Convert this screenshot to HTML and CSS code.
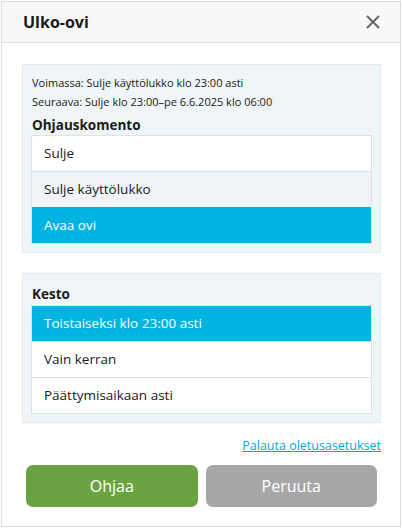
FILE: index.html
```html
<!DOCTYPE html>
<html lang="fi">
<head>
  <meta charset="UTF-8" />
  <meta name="viewport" content="width=device-width, initial-scale=1.0"/>
  <title>Ulko-ovi</title>
  <link rel="stylesheet" href="styles.css">
</head>
<body>
  <div class="dialog">
    <div class="header">
      <h1 class="title">Ulko-ovi</h1>
      <button class="close" aria-label="Sulje">
        <svg width="14" height="14" viewBox="0 0 14 14">
          <path d="M1 1 L13 13 M13 1 L1 13" stroke="#666" stroke-width="2" fill="none"/>
        </svg>
      </button>
    </div>
    <div class="content">
      <div class="panel">
        <div class="status">Voimassa: Sulje käyttölukko klo 23:00 asti</div>
        <div class="status">Seuraava: Sulje klo 23:00–pe 6.6.2025 klo 06:00</div>
        <h2 class="heading">Ohjauskomento</h2>
        <ul class="options">
          <li>Sulje</li>
          <li class="hover">Sulje käyttölukko</li>
          <li class="selected">Avaa ovi</li>
        </ul>
      </div>
      <div class="panel panel2">
        <h2 class="heading">Kesto</h2>
        <ul class="options">
          <li class="selected">Toistaiseksi klo 23:00 asti</li>
          <li>Vain kerran</li>
          <li>Päättymisaikaan asti</li>
        </ul>
      </div>
      <div class="reset"><a href="#">Palauta oletusasetukset</a></div>
    </div>
    <div class="buttons">
      <button class="btn ok">Ohjaa</button>
      <button class="btn cancel">Peruuta</button>
    </div>
  </div>
</body>
</html>
```

FILE: styles.css
```css
body {
  margin: 0;
  font-family: "Open Sans", "Noto Sans", sans-serif;
  color: #1a1a1a;
  background: #fff;
}
.dialog {
  margin: 1px;
  width: 398px;
  height: 524px;
  border: 1px solid #dcdcdc;
  display: flex;
  flex-direction: column;
}
.header {
  height: 40px;
  background: #f7f8fa;
  border-bottom: 1px solid #dedede;
  display: flex;
  align-items: center;
  justify-content: space-between;
  padding: 0 20px 0 21px;
}
.title {
  margin: 0;
  font-size: 16px;
  font-weight: 700;
  color: #1a1a1a;
}
.close {
  border: none;
  background: none;
  padding: 0;
  width: 14px;
  height: 14px;
  display: flex;
}
.content {
  padding: 21px 19px 0 20px;
}
.panel {
  background: #f0f5f8;
  border: 1px solid #e1e9ee;
  padding: 8px;
}
.panel2 {
  margin-top: 20px;
}
.status {
  font-size: 11px;
  line-height: 19px;
  padding-left: 1px;
}
.heading {
  margin: 4px 0 0 1px;
  font-size: 13.5px;
  font-weight: 700;
  line-height: 20px;
}
.panel2 .heading {
  margin: 2px 0 1px 1px;
}
.options {
  list-style: none;
  margin: 0;
  padding: 0;
  border: 1px solid #dde2e6;
  background: #fff;
}
.options li {
  height: 35px;
  line-height: 35px;
  padding-left: 12px;
  font-size: 13.5px;
  border-top: 1px solid #dde2e6;
}
.options li:first-child {
  border-top: none;
}
.options li.hover {
  background: #f0f4f7;
}
.options li.selected {
  background: #00b4e2;
  color: #fff;
  border-top-color: #00b4e2;
}
.reset {
  text-align: right;
  margin-top: 14px;
  font-size: 12.5px;
  line-height: 18px;
}
.reset a {
  color: #00a8e0;
}
.buttons {
  display: flex;
  gap: 8px;
  padding: 10px 23px 0 24px;
}
.btn {
  flex: 1;
  height: 42px;
  border: none;
  border-radius: 7px;
  color: #fff;
  font-family: "Open Sans", "Noto Sans", sans-serif;
  font-size: 16px;
}
.ok {
  background: #6aa343;
}
.cancel {
  background: #a7a7a7;
}
```
